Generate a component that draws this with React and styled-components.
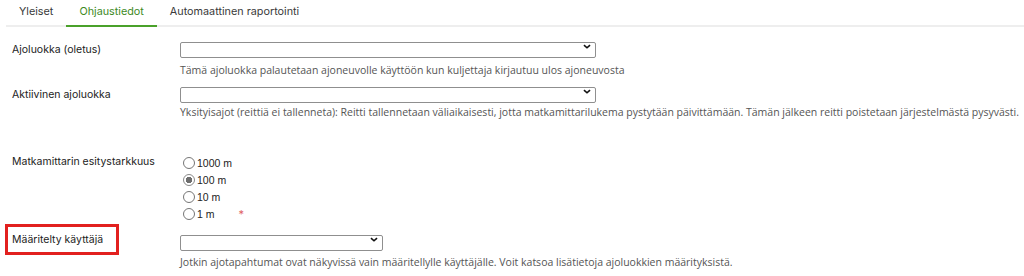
import styled, { createGlobalStyle } from "styled-components";

const GlobalStyle = createGlobalStyle`
body {
    margin: 0;
    background: #FFFFFF;
    font-family: 'Inter', 'Noto Sans', sans-serif;
}
`

const tabs = ["Yleiset", "Ohjaustiedot", "Automaattinen raportointi"];
const tarkkuudet = ["1000 m", "100 m", "10 m", "1 m"];

function Valinta({ width }) {
    return (
        <SelectWrap width={width}>
            <Select>
                <option></option>
            </Select>
            <Chevron viewBox="0 0 10 6">
                <path d="M1.2 1.2 L5 4.6 L8.8 1.2" fill="none" stroke="#111" strokeWidth="2" />
            </Chevron>
        </SelectWrap>
    )
}

export default function App() {
    return (
        <Page>
            <GlobalStyle />
            <TabBar>
                {tabs.map((t, i) => <Tab key={t} active={i === 1}>{t}</Tab>)}
            </TabBar>
            <Form>
                <Row top={12}>
                    <Label pad={4}>Ajoluokka (oletus)</Label>
                    <Field>
                        <Valinta width={416} />
                        <Help gap={8}>Tämä ajoluokka palautetaan ajoneuvolle käyttöön kun kuljettaja kirjautuu ulos ajoneuvosta</Help>
                    </Field>
                </Row>
                <Row top={7}>
                    <Label pad={4}>Aktiivinen ajoluokka</Label>
                    <Field>
                        <Valinta width={416} />
                        <Help gap={5}>Yksityisajot (reittiä ei tallenneta): Reitti tallennetaan väliaikaisesti, jotta matkamittarilukema pystytään päivittämään. Tämän jälkeen reitti poistetaan järjestelmästä pysyvästi.</Help>
                    </Field>
                </Row>
                <Row top={35}>
                    <Label pad={1}>Matkamittarin esitystarkkuus</Label>
                    <Radios>
                        {tarkkuudet.map((t, i) => (
                            <RadioRow key={t}>
                                <Circle checked={i === 1} />
                                <RadioText>{t}</RadioText>
                                {i === 3 && <Required>*</Required>}
                            </RadioRow>
                        ))}
                    </Radios>
                </Row>
                <Row top={2} center>
                    <Highlight>
                        <Label>Määritelty käyttäjä</Label>
                    </Highlight>
                    <Field>
                        <Valinta width={203} />
                    </Field>
                </Row>
                <HelpRow>
                    <Help gap={0}>Jotkin ajotapahtumat ovat näkyvissä vain määritellylle käyttäjälle. Voit katsoa lisätietoja ajoluokkien määrityksistä.</Help>
                </HelpRow>
            </Form>
        </Page>
    )
}

const Page = styled.div`
width: 1024px;
height: 276px;
overflow: hidden;
background: #FFFFFF;
`

const TabBar = styled.div`
display: flex;
margin-left: 6px;
height: 25px;
border-bottom: 2px solid #EEEEEE;
`

const Tab = styled.div`
display: flex;
align-items: center;
padding: 0 13px 3px;
box-sizing: border-box;
margin-bottom: -2px;
height: 27px;
font-size: 10.8px;
color: ${p => p.active ? "#3E8A1E" : "#3A3A3A"};
border-bottom: 2px solid ${p => p.active ? "#4AA12A" : "transparent"};
`

const Form = styled.div`
padding-left: 12px;
`

const Row = styled.div`
display: grid;
grid-template-columns: 168px 1fr;
align-items: ${p => p.center ? "center" : "start"};
margin-top: ${p => p.top}px;
`

const Label = styled.div`
font-size: 10.5px;
line-height: 14px;
color: #222222;
padding-top: ${p => p.pad || 0}px;
`

const Highlight = styled.div`
margin-left: -7px;
width: 104px;
height: 25px;
padding: 0 0 0 4px;
box-sizing: content-box;
border: 3px solid #E2201F;
display: flex;
align-items: center;
white-space: nowrap;
`

const Field = styled.div`
display: flex;
flex-direction: column;
`

const SelectWrap = styled.div`
position: relative;
width: ${p => p.width}px;
height: 16px;
`

const Select = styled.select`
appearance: none;
width: 100%;
height: 100%;
margin: 0;
border: 1px solid #8F8F8F;
border-radius: 2px;
background: #FFFFFF;
`

const Chevron = styled.svg`
position: absolute;
right: 5px;
top: 5px;
width: 8px;
height: 5px;
pointer-events: none;
`

const Help = styled.div`
margin-top: ${p => p.gap}px;
font-family: 'Open Sans', 'Noto Sans', sans-serif;
font-size: 10.5px;
line-height: 14px;
color: #555555;
white-space: nowrap;
`

const HelpRow = styled.div`
padding-left: 168px;
margin-top: 0;
`

const Radios = styled.div`
display: flex;
flex-direction: column;
padding-left: 3px;
`

const RadioRow = styled.div`
display: flex;
align-items: center;
height: 17px;
`

const Circle = styled.span`
width: 10px;
height: 10px;
border-radius: 50%;
border: 1px solid ${p => p.checked ? "#8A8A8A" : "#767676"};
background: ${p => p.checked ? "radial-gradient(circle, #6E6E6E 0 3px, #FFFFFF 3.5px)" : "#FFFFFF"};
margin-right: 2px;
`

const RadioText = styled.span`
font-family: 'Liberation Sans', Arial, sans-serif;
font-size: 10.5px;
color: #222222;
`

const Required = styled.span`
margin-left: 24px;
color: #E06060;
font-size: 11px;
`
